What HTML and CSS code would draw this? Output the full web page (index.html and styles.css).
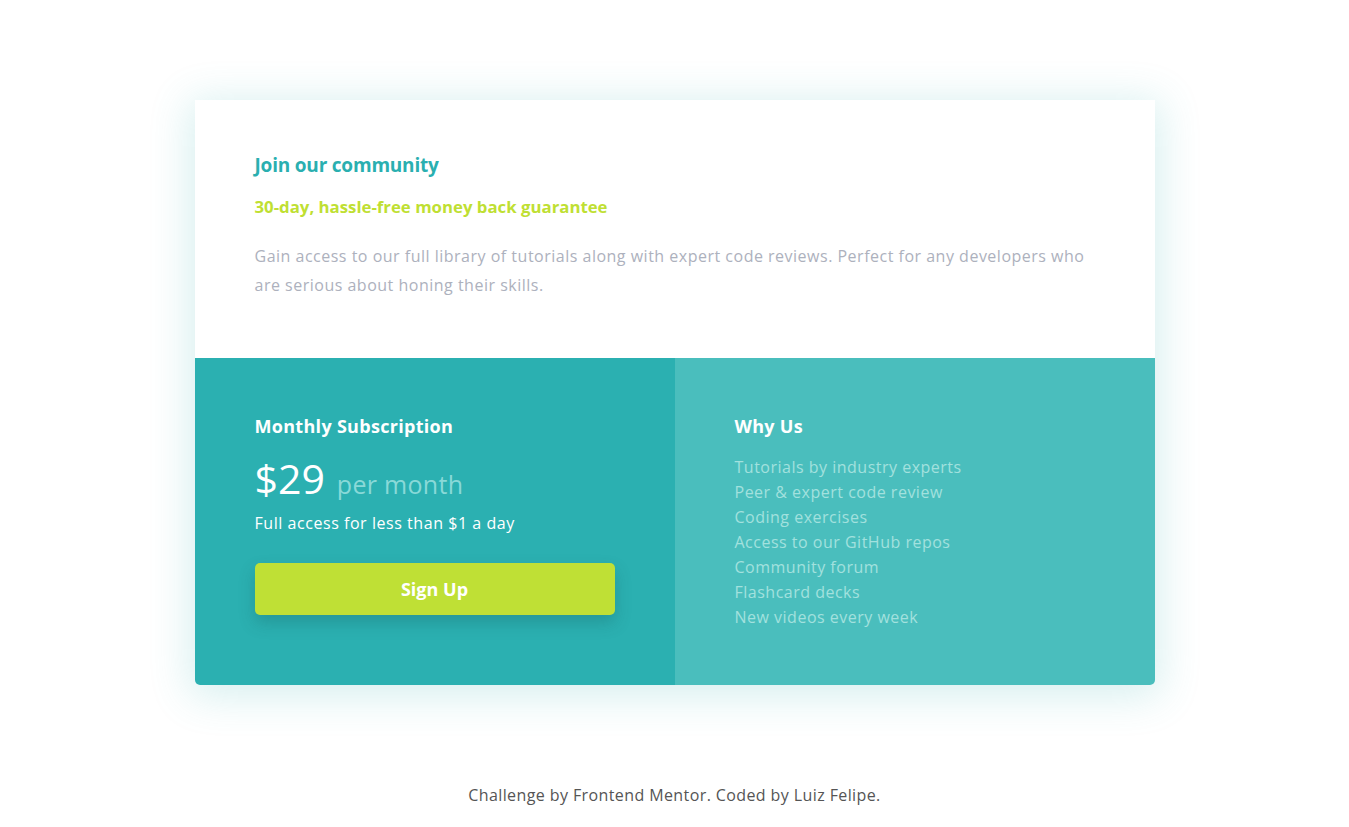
FILE: index.html
```html
<!DOCTYPE html>
<html lang="en">
<head>
<meta charset="utf-8">
<title>Single price grid</title>
<link rel="stylesheet" href="styles.css">
</head>
<body>
<main class="page">
  <section class="card">
    <div class="intro">
      <h1 class="intro-title">Join our community</h1>
      <h2 class="intro-sub">30-day, hassle-free money back guarantee</h2>
      <p class="intro-text">Gain access to our full library of tutorials along with expert code reviews. Perfect for any developers who are serious about honing their skills.</p>
    </div>
    <div class="bottom">
      <div class="sub">
        <h3 class="col-title">Monthly Subscription</h3>
        <div class="price"><span class="price-amount">$29</span><span class="price-per">per month</span></div>
        <p class="price-note">Full access for less than $1 a day</p>
        <button class="btn">Sign Up</button>
      </div>
      <div class="why">
        <h3 class="col-title">Why Us</h3>
        <ul class="why-list">
          <li>Tutorials by industry experts</li>
          <li>Peer &amp; expert code review</li>
          <li>Coding exercises</li>
          <li>Access to our GitHub repos</li>
          <li>Community forum</li>
          <li>Flashcard decks</li>
          <li>New videos every week</li>
        </ul>
      </div>
    </div>
  </section>
  <footer class="attribution">Challenge by Frontend Mentor. Coded by Luiz Felipe.</footer>
</main>
</body>
</html>
```

FILE: styles.css
```css
* { box-sizing: border-box; }
html, body { margin: 0; padding: 0; }
body {
  background: #ffffff;
  font-family: "Open Sans", "Noto Sans", sans-serif;
  font-size: 16px;
}
.page {
  display: flex;
  flex-direction: column;
  align-items: center;
  padding-top: 100px;
}
.card {
  width: 960px;
  border-radius: 0 0 5px 5px;
  box-shadow: 0 6px 40px 6px rgba(60, 182, 182, 0.2);
  overflow: hidden;
}
.intro {
  background: #fff;
  height: 258px;
  padding: 52px 60px 0;
}
.intro-title {
  margin: 0;
  font-size: 19px;
  line-height: 26px;
  font-weight: 700;
  letter-spacing: -0.2px;
  color: #2aafb0;
}
.intro-sub {
  margin: 18px 0 0;
  font-size: 16.8px;
  line-height: 22px;
  font-weight: 700;
  color: #bfdf33;
}
.intro-text {
  margin: 24px 0 0;
  font-size: 16px;
  line-height: 29px;
  letter-spacing: 0.5px;
  color: #adb1bd;
}
.bottom {
  display: grid;
  grid-template-columns: 1fr 1fr;
  height: 327px;
}
.sub {
  background: #2bb0b1;
  padding: 55px 60px 0;
}
.why {
  background: #4abebd;
  padding: 55px 60px 0;
}
.col-title {
  margin: 0;
  color: #fff;
  font-size: 18px;
  line-height: 26px;
  font-weight: 700;
  letter-spacing: 0.3px;
}
.price {
  display: flex;
  align-items: baseline;
  margin-top: 12px;
  height: 54px;
}
.price-amount {
  color: #fff;
  font-size: 41px;
  line-height: 54px;
}
.price-per {
  margin-left: 12px;
  color: #89d9d8;
  font-size: 25px;
  font-weight: 400;
  letter-spacing: 0.3px;
}
.price-note {
  margin: 7px 0 0;
  color: #fff;
  font-size: 16px;
  line-height: 22px;
  letter-spacing: 0.55px;
}
.btn {
  display: block;
  margin-top: 29px;
  width: 360px;
  height: 52px;
  border: 0;
  border-radius: 5px;
  background: #bfe035;
  color: #fff;
  font-family: inherit;
  font-size: 18px;
  font-weight: 700;
  box-shadow: 0 8px 16px rgba(20, 80, 80, 0.25);
}
.why-list {
  list-style: none;
  margin: 16px 0 0;
  padding: 0;
  color: #a2e1de;
  font-size: 16px;
  line-height: 25px;
  letter-spacing: 0.5px;
}
.attribution {
  margin-top: 99px;
  font-size: 16px;
  line-height: 22px;
  letter-spacing: 0.4px;
  color: #555;
}
```
